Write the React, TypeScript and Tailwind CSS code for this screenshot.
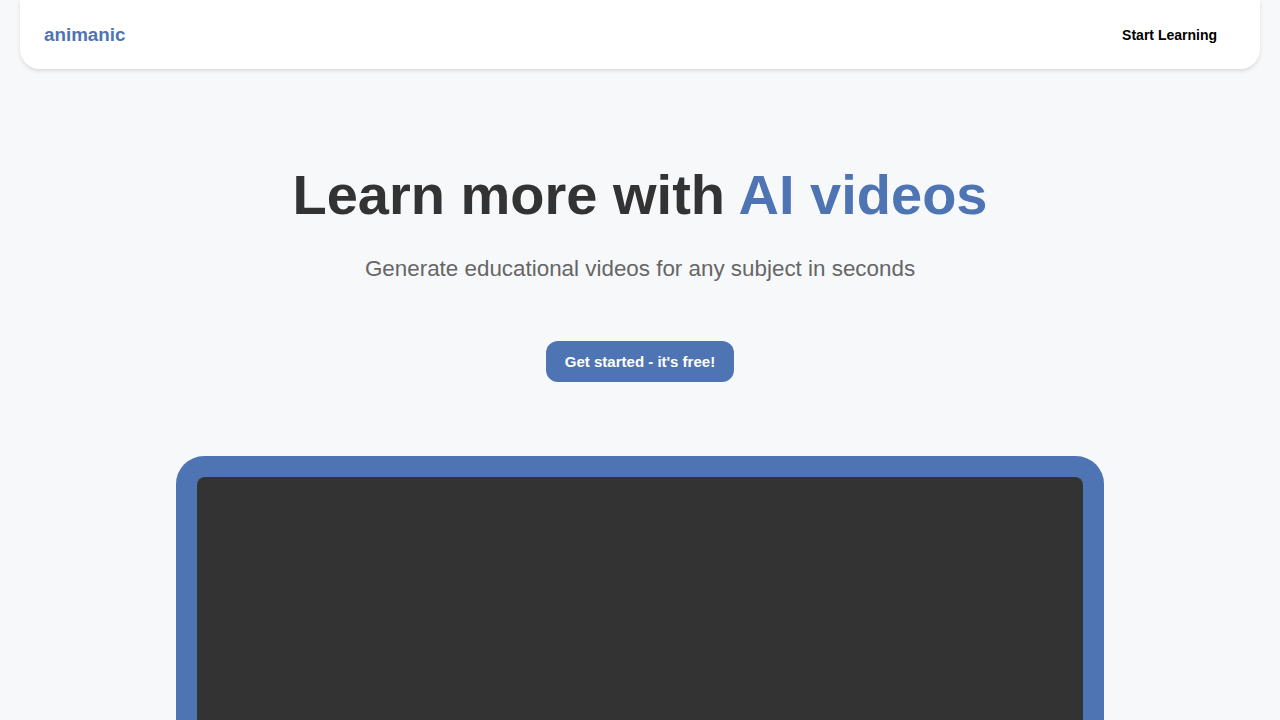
import React from "react";

const font = { fontFamily: '"Liberation Sans", Arial, sans-serif' };

const App = () => {
  return (
    <div className="min-h-screen bg-[#f7f8fa] overflow-hidden" style={font}>
      <header className="mx-5 h-[69px] bg-white rounded-b-[20px] shadow-[0_2px_4px_rgba(0,0,0,0.12)] flex items-center justify-between pl-6 pr-[43px] pt-[2px]">
        <span className="text-[18.8px] font-bold text-[#4f74b3]">animanic</span>
        <button className="text-[14px] font-bold text-black">Start Learning</button>
      </header>

      <main className="flex flex-col items-center">
        <h1 className="mt-[94px] text-[56px] leading-[64px] font-bold text-[#333333]">
          Learn more with <span className="text-[#4f74b3]">AI videos</span>
        </h1>
        <p className="mt-[29px] text-[22.4px] leading-[26px] text-[#666666]">
          Generate educational videos for any subject in seconds
        </p>
        <button className="mt-[59px] h-[41px] w-[188px] rounded-[12px] bg-[#4f74b3] pt-[2px] text-white text-[15px] font-bold">
          Get started - it's free!
        </button>

        {/* video frame */}
        <div className="mt-[74px] w-[928px] h-[400px] rounded-[28px] bg-[#4f74b3] p-[21px]">
          <div className="w-full h-full rounded-[8px] bg-[#333333]" />
        </div>
      </main>
    </div>
  );
};

export default App;
